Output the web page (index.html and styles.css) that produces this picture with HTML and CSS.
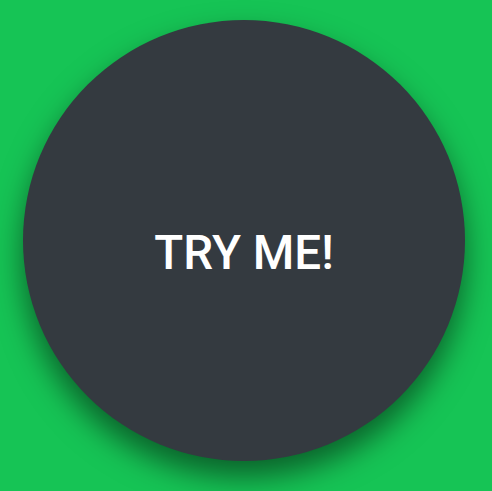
FILE: index.html
```html
<!DOCTYPE html>
<html>
<head>
<meta charset="utf-8">
<link rel="stylesheet" href="styles.css">
</head>
<body>
<div class="stage">
  <button class="try-btn"><span class="label">TRY ME!</span></button>
</div>
</body>
</html>
```
FILE: styles.css
```css
html, body {
  margin: 0;
  padding: 0;
  width: 492px;
  height: 491px;
  background: #16c455;
  overflow: hidden;
}
.stage {
  padding: 20px 0 0 23px;
}
.try-btn {
  width: 442px;
  height: 441px;
  border-radius: 50%;
  border: none;
  background: #343a40;
  box-shadow: 0 16px 30px rgba(0, 0, 0, 0.5);
  display: flex;
  align-items: center;
  justify-content: center;
  padding: 27px 0 0 0;
  margin: 0;
  cursor: pointer;
}
.label {
  font-family: Roboto, "Liberation Sans", sans-serif;
  font-weight: 500;
  font-size: 47.5px;
  color: #ffffff;
  line-height: 1;
}
```
